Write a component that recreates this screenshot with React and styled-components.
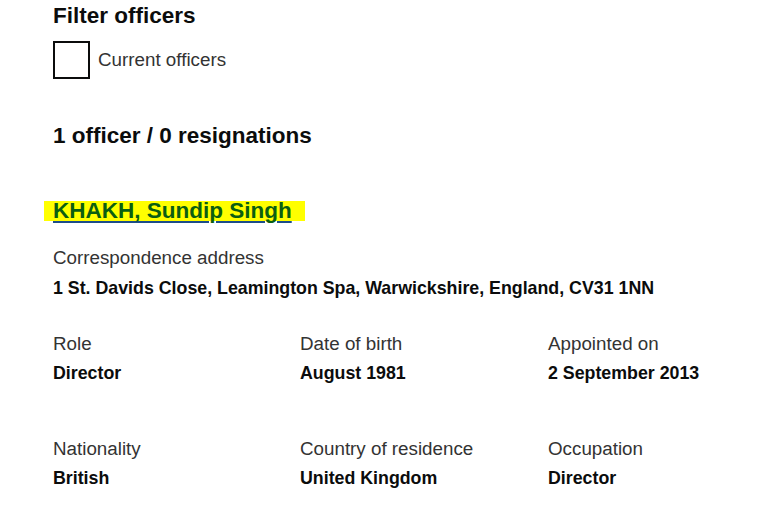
import React from "react";
import styled, { createGlobalStyle } from "styled-components";

const Global = createGlobalStyle`
  body {
    margin: 0;
    background: #fff;
    font-family: "Liberation Sans", Arial, sans-serif;
    color: #0b0c0c;
  }
`;

const Page = styled.div`
  padding: 4px 0 0 53px;
  width: 712px;
`;

const Heading = styled.h2`
  margin: 0;
  font-size: 22.5px;
  font-weight: 700;
  line-height: 24px;
  color: #0b0c0c;
`;

const CheckRow = styled.label`
  display: flex;
  align-items: center;
  gap: 8px;
  margin-top: 13px;
  font-size: 18.8px;
  color: #333;
`;

const Box = styled.span`
  width: 33px;
  height: 34px;
  border: 2px solid #0b0c0c;
  display: inline-block;
`;

const Count = styled(Heading)`
  margin-top: 45px;
`;

const NameLink = styled.a`
  display: inline-block;
  margin: 53px 0 0 -9px;
  padding: 0 13px 0 9px;
  background: #ffff00;
  font-size: 22.5px;
  font-weight: 700;
  line-height: 20px;
  color: #0b5e12;
  text-decoration: underline;
  text-decoration-color: #1d4e89;
  text-decoration-thickness: 2px;
  text-underline-offset: 3px;
`;

const Label = styled.div`
  font-size: 18.8px;
  color: #333;
  line-height: 20px;
`;

const Value = styled.div`
  font-size: 17.8px;
  font-weight: 700;
  color: #0b0c0c;
  line-height: 20px;
  margin-top: ${(p) => p.$gap ?? 10}px;
`;

const Address = styled.div`
  margin-top: 26px;
`;

const Grid = styled.div`
  display: grid;
  grid-template-columns: 247px 248px 1fr;
  margin-top: ${(p) => p.$top}px;
`;

const rows = [
  [
    ["Role", "Director"],
    ["Date of birth", "August 1981"],
    ["Appointed on", "2 September 2013"],
  ],
  [
    ["Nationality", "British"],
    ["Country of residence", "United Kingdom"],
    ["Occupation", "Director"],
  ],
];

export default function App() {
  return (
    <>
      <Global />
      <Page>
        <Heading>Filter officers</Heading>
        <CheckRow>
          <Box />
          Current officers
        </CheckRow>
        <Count>1 officer / 0 resignations</Count>
        <NameLink href="#">KHAKH, Sundip Singh</NameLink>
        <Address>
          <Label>Correspondence address</Label>
          <Value>1 St. Davids Close, Leamington Spa, Warwickshire, England, CV31 1NN</Value>
        </Address>
        {rows.map((row, i) => (
          <Grid key={i} $top={i === 0 ? 36 : 56}>
            {row.map(([l, v]) => (
              <div key={l}>
                <Label>{l}</Label>
                <Value $gap={9}>{v}</Value>
              </div>
            ))}
          </Grid>
        ))}
      </Page>
    </>
  );
}
